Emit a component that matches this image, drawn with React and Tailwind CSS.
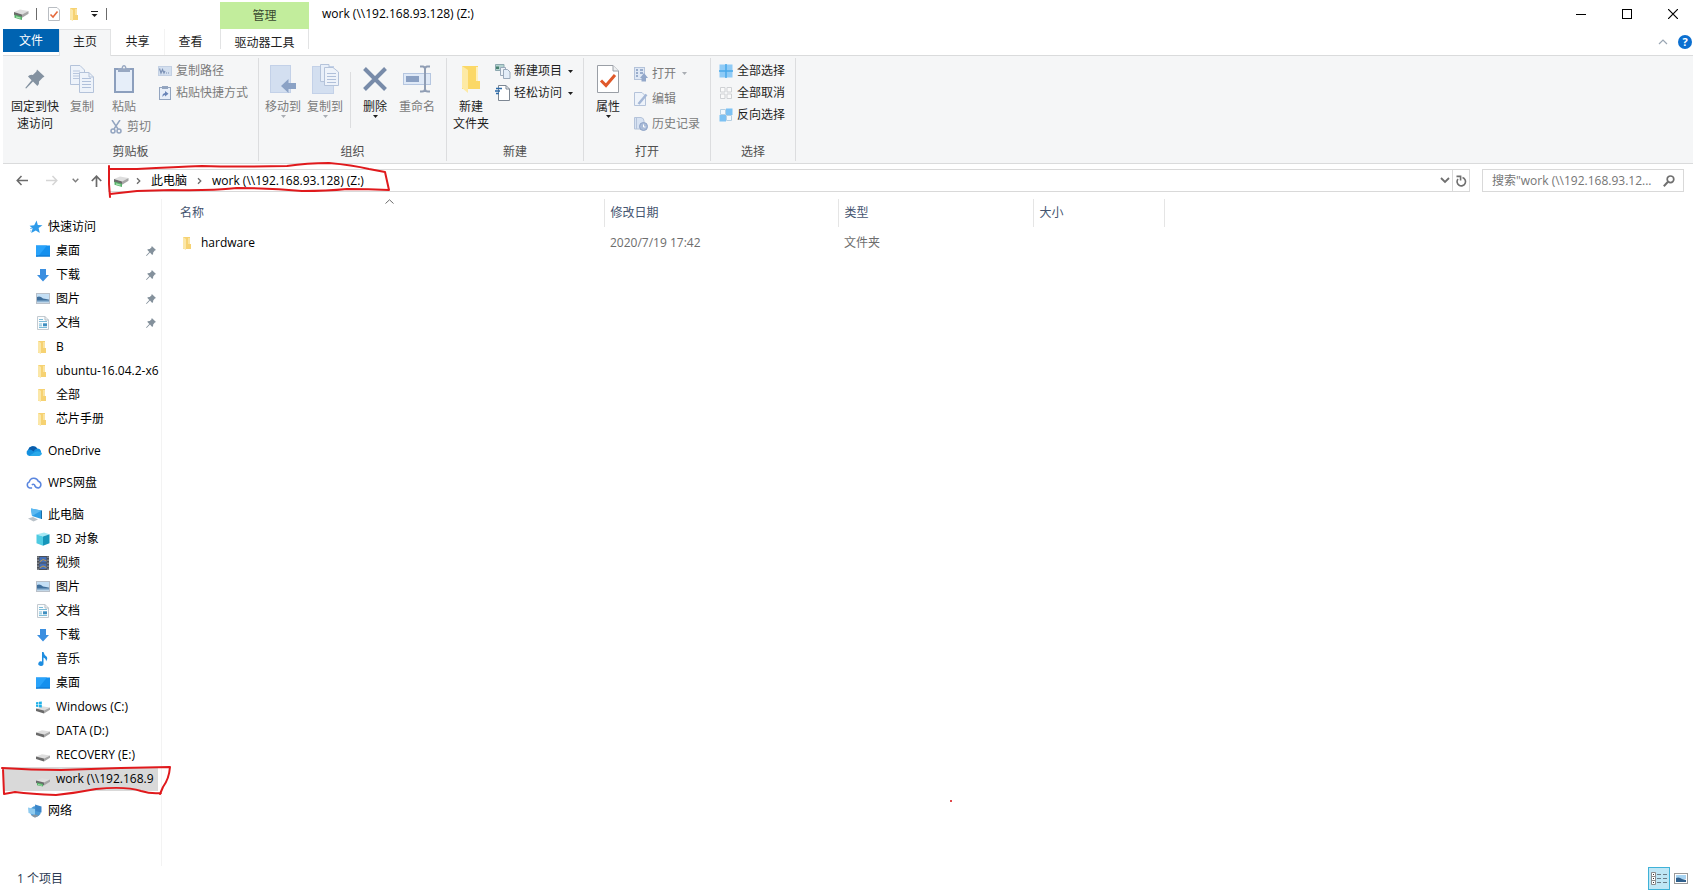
import React, { useState } from 'react';

/* ---------- small icons ---------- */

const DriveIcon = ({ net, win }) => (
  <svg width="16" height="16" viewBox="0 0 16 16" className="shrink-0">
    <path d="M1 9.5 L7 7.2 L15 8.6 L9 11.6 Z" fill="#dedede" />
    <path d="M1 9.5 L9 11.6 V14.4 L1 12 Z" fill="#6a6a6a" />
    <path d="M9 11.6 L15 8.6 V10.8 L9 14.4 Z" fill="#a6a6a6" />
    {net && (
      <>
        <path d="M2 11.4 L8 13 V15.6 L2 14.2 Z" fill="#57b069" />
        <path d="M3 13.4 L7 14.4" stroke="#9cdca6" strokeWidth="1" />
      </>
    )}
    {win && <path d="M1 3.2 L3.4 2.9 V5.2 H1 Z M4 2.8 L6.8 2.4 V5.2 H4 Z M1 5.8 H3.4 V8.1 L1 7.8 Z M4 5.8 H6.8 V8.6 L4 8.2 Z" fill="#1fb1e8" />}
  </svg>
);

const NetDriveIcon = () => (
  <svg width="16" height="14" viewBox="0 0 16 14" className="shrink-0">
    <path d="M1 5 L7 2.5 L15.5 4 L9 7.4 Z" fill="#dedede" />
    <path d="M1 5 L9 7.4 V10.8 L1 8 Z" fill="#6a6a6a" />
    <path d="M9 7.4 L15.5 4 V6.8 L9 10.8 Z" fill="#a6a6a6" />
    <path d="M1.5 7.6 L9 9.8 V13 L1.5 10.8 Z" fill="#57b069" />
    <path d="M3 9.9 L7.5 11.2" stroke="#a9e5b2" strokeWidth="1.2" />
  </svg>
);

const FolderIcon = () => (
  <svg width="16" height="16" viewBox="0 0 16 16" className="shrink-0">
    <path d="M3 2 H10 V9 H11 V14 H3 Z" fill="#f6d272" />
    <path d="M3 2 L6 4 V15 L3 13.5 Z" fill="#fbe7a8" />
    <path d="M8 3 H10 V9 H8 Z" fill="#fae3a0" />
  </svg>
);

const StarIcon = () => (
  <svg width="16" height="16" viewBox="0 0 16 16" className="shrink-0">
    <path d="M9.6 1.5 L10.8 6 L15.5 6.2 L11.6 9 L12.8 14 L8.8 11.4 L4.2 14 L5.6 9.6 L2.6 6.8 L7.2 6.2 Z" fill="#2e9bea" />
    <path d="M3 9.5 H5 M3 12 H4.6" stroke="#8cc8f5" strokeWidth="1" />
  </svg>
);

const DesktopIcon = () => (
  <svg width="16" height="16" viewBox="0 0 16 16" className="shrink-0">
    <rect x="1" y="2.500" width="14" height="11" fill="#1590ee" />
    <path d="M1 2.500 H12 L3 13.500 H1 Z" fill="#28a2fa" />
    <path d="M1 13 H15" stroke="#0e75cc" strokeWidth="1" />
  </svg>
);

const DownloadIcon = () => (
  <svg width="16" height="16" viewBox="0 0 16 16" className="shrink-0">
    <path d="M5 2 H11 V8 H14 L8 14.5 L2 8 H5 Z" fill="#3b8fe0" />
  </svg>
);

const PictureIcon = () => (
  <svg width="16" height="16" viewBox="0 0 16 16" className="shrink-0">
    <rect x="1.5" y="2.5" width="13" height="10" fill="#f4f8fb" stroke="#b9c0c9" />
    <rect x="2" y="3" width="12" height="5" fill="#c4dff5" />
    <path d="M2 6 Q5 4.500 8 7.500 L14 8.500 V11 H2 Z" fill="#3f6f9c" />
    <path d="M2 9.500 H14 V11.500 H2 Z" fill="#8fb4d3" />
  </svg>
);

const DocumentIcon = () => (
  <svg width="16" height="16" viewBox="0 0 16 16" className="shrink-0">
    <path d="M2.5 1.5 H10 L13.5 5 V14.5 H2.5 Z" fill="#fafcfd" stroke="#c3cad0" />
    <path d="M10 1.5 V5 H13.5" fill="none" stroke="#b3bcc4" />
    <path d="M4 4.5 H8 M4 6.5 H12 M4 9 H7 M4 12.5 H12 M4 10.8 H7" stroke="#7cbcd9" />
    <rect x="8" y="8.3" width="4" height="3" fill="#3f8fc0" />
  </svg>
);

const OneDriveIcon = () => (
  <svg width="18" height="16" viewBox="0 0 17 16" className="shrink-0 -ml-0.5">
    <path d="M4 13 A3.4 3.4 0 0 1 2.6 6.8 A5.2 5.2 0 0 1 11.8 5.6 A3.8 3.8 0 0 1 13 13 Z" fill="#1490df" />
    <path d="M2.6 6.8 A5.2 5.2 0 0 1 11.8 5.6 Q9 6 8 8.5 Q5.5 6 2.6 6.8 Z" fill="#0b5ba9" />
    <path d="M3.6 13 L9.5 9 Q13 7.2 16.4 10 Q16.4 12.6 13 13 Z" fill="#29a9ea" />
  </svg>
);

const WpsCloudIcon = () => (
  <svg width="18" height="16" viewBox="0 0 17 16" className="shrink-0 -ml-0.5" fill="none" stroke="#5a86df" strokeWidth="1.5">
    <path d="M6.600 13 H4.300 A3.200 3.200 0 0 1 3.800 6.900 A4.700 4.700 0 0 1 12.800 6.300 A3.500 3.500 0 0 1 13 13 Q9.600 12.800 9 9.800 Q7.600 8.600 6.400 10" />
  </svg>
);

const ComputerIcon = () => (
  <svg width="16" height="16" viewBox="0 0 16 16" className="shrink-0">
    <path d="M4 1.5 L14.5 3.5 V12 L5 9 Z" fill="#2f9fe6" />
    <path d="M4 1.5 L14.5 3.5 L5 9 Z" fill="#5cb9f1" />
    <path d="M1 11.5 L6 10 L11 12.5 L6.5 14.5 Z" fill="#b9c2c9" />
    <path d="M14.5 3.5 V12" stroke="#1c6ea8" />
  </svg>
);

const CubeIcon = () => (
  <svg width="16" height="16" viewBox="0 0 16 16" className="shrink-0">
    <path d="M1.5 3.5 L9 1.5 L14.5 3.2 L8 5.5 Z" fill="#a5e9f4" />
    <path d="M1.5 3.5 L8 5.5 V14.8 L1.5 12.2 Z" fill="#4fcbe2" />
    <path d="M8 5.5 L14.5 3.2 V12.2 L8 14.8 Z" fill="#1696ba" />
  </svg>
);

const VideoIcon = () => (
  <svg width="16" height="16" viewBox="0 0 16 16" className="shrink-0">
    <rect x="2" y="1" width="12" height="14" fill="#4b4f57" />
    <path d="M3 1.5 V15 M13 1.5 V15" stroke="#b5b9bf" strokeDasharray="1.5 1.5" />
    <rect x="4.5" y="2" width="7" height="5.5" fill="#4570b8" />
    <rect x="4.5" y="8.5" width="7" height="5.5" fill="#4570b8" />
    <path d="M4.5 7 L8 4.5 L11.5 6 M4.5 13 L8 11 L11.5 12.5" stroke="#c09a4e" fill="none" />
  </svg>
);

const MusicIcon = () => (
  <svg width="16" height="16" viewBox="0 0 16 16" className="shrink-0">
    <path d="M7 1 H8.5 Q9 4 12 6 Q13 8 11 10.5 Q11.2 7.5 8.5 6.5 V12.5 A2.6 2.3 0 1 1 7 10.6 Z" fill="#1e8de0" />
  </svg>
);

const NetworkIcon = () => (
  <svg width="16" height="16" viewBox="0 0 16 16" className="shrink-0">
    <circle cx="8.5" cy="8.500" r="5.4" fill="#4a9ad6" />
    <path d="M8 1.5 L14.5 3.500 V9.5 L8.5 8 Z" fill="#3c86c9" />
    <path d="M1 4.5 L8 6 V12 L1.5 10 Z" fill="#8fcbf0" />
    <path d="M4 12.6 L8 14.8 L12 12.4 L8 11.5 Z" fill="#8796a3" />
  </svg>
);

const PinSmall = () => (
  <svg width="12" height="12" viewBox="0 0 12 12" className="shrink-0">
    <path d="M6.8 1 L11 5 L9.8 5.6 L8.2 7.6 Q8.4 9.4 7.2 10 L5 7.6 L1.6 11 L1 10.6 L4.3 7 L2.2 4.8 Q3 3.8 4.7 4 L6.4 2.4 Z" fill="#84919c" />
  </svg>
);

/* ---------- ribbon icons ---------- */

const PinBig = () => (
  <svg width="22" height="22" viewBox="0 0 22 22">
    <path d="M13 1.5 L20.5 8.6 L18.6 9.8 L15 13.4 Q15.6 16.6 13.4 18 L9 13.6 L2.2 20.6 L1.2 20 L7.6 12.2 L4 8.6 Q5.4 6.4 8.8 7 L12.4 3.6 Z" fill="#8492a1" />
  </svg>
);

const CopyBig = () => (
  <svg width="24" height="28" viewBox="0 0 24 28">
    <path d="M.5 .5 H10 L14.5 5 V19.5 H.5 Z" fill="#eef3fa" stroke="#b4c3da" />
    <path d="M3 6 H10 M3 8.5 H12 M3 11 H12 M3 13.5 H12" stroke="#b9c7de" />
    <path d="M9.5 7.500 H19 L23.500 12 V27.500 H9.500 Z" fill="#eef3fa" stroke="#b4c3da" />
    <path d="M19 7.500 V12 H23.500" fill="none" stroke="#b4c3da" />
    <path d="M12 13.500 H21 M12 16.500 H21 M12 19.500 H21 M12 22.500 H21" stroke="#b0c0da" />
  </svg>
);

const PasteBig = () => (
  <svg width="22" height="30" viewBox="0 0 22 30">
    <rect x="2" y="5" width="18" height="23" fill="#e6eef9" stroke="#8c9fbd" strokeWidth="2" />
    <path d="M5 4 H8.500 Q9 1 11 1 Q13 1 13.500 4 H17 V8 H5 Z" fill="#98a8c2" />
    <circle cx="11" cy="3.500" r="1" fill="#f5f6f7" />
  </svg>
);

const MoveBig = () => (
  <svg width="26" height="29" viewBox="0 0 26 29">
    <rect x=".5" y=".5" width="20" height="27" fill="#d3dff0" stroke="#c3d1e8" />
    <path d="M11 21 L18.500 14 V18 H26 V24 H18.500 V28 Z" fill="#8ba2c5" />
  </svg>
);

const CopyToBig = () => (
  <svg width="27" height="30" viewBox="0 0 27 30">
    <rect x=".5" y="2.500" width="21" height="27" fill="#d3dff0" stroke="#c3d1e8" />
    <path d="M8.500 .5 H17 V17.500 H8.500 Z" fill="#e8eff9" stroke="#b4c3da" />
    <path d="M12.500 3.500 H21 L26.500 8 V21.500 H12.500 Z" fill="#eef3fa" stroke="#b4c3da" />
    <path d="M15 9.500 H24 M15 12.500 H24 M15 15.500 H24 M15 18.500 H24" stroke="#b0c0da" />
  </svg>
);

const DeleteBig = () => (
  <svg width="24" height="24" viewBox="0 0 24 24">
    <path d="M1.500 1.500 L22.500 22.500 M22.500 1.500 L1.500 22.500" stroke="#788ba9" strokeWidth="4" />
  </svg>
);

const RenameBig = () => (
  <svg width="28" height="28" viewBox="0 0 28 28">
    <rect x=".5" y="8.500" width="27" height="11" fill="#dfe9f7" stroke="#b5c6e0" />
    <rect x="3" y="11" width="13" height="6" fill="#8aa0c3" />
    <path d="M17 1.500 H20 Q22 2 22 4 V24 Q22 26.500 19 26.500 H17 M27 1.500 H24 Q22 2 22 4 M22 24 Q22 26.500 25 26.500 H27" fill="none" stroke="#8f9db4" strokeWidth="2" />
  </svg>
);

const NewFolderBig = () => (
  <svg width="20" height="28" viewBox="0 0 20 28">
    <path d="M1 1 H17 V16 H19 V24 H1 Z" fill="#fbd867" />
    <path d="M1 1 L7 5 V28 L1 23 Z" fill="#fdeaa5" />
    <path d="M15 2 H17 V16 H15 Z" fill="#fff0bd" />
  </svg>
);

const PropertiesBig = () => (
  <svg width="22" height="28" viewBox="0 0 22 28">
    <path d="M.5 .5 H16 L21.500 6 V27.500 H.5 Z" fill="#fff" stroke="#9a9fa6" />
    <path d="M16 .5 V6 H21.500" fill="#eef0f2" stroke="#9a9fa6" />
    <path d="M4 15.500 L9 20.500 L18 10" fill="none" stroke="#e0592a" strokeWidth="3" />
  </svg>
);

const CutIcon = () => (
  <svg width="12" height="14" viewBox="0 0 12 14" fill="none" stroke="#93a5c0" strokeWidth="1.500">
    <path d="M2 0 L8 9 M10 0 L4 9" />
    <circle cx="3" cy="11" r="2" />
    <circle cx="9" cy="11" r="2" />
  </svg>
);

const CopyPathIcon = () => (
  <svg width="14" height="14" viewBox="0 0 14 14">
    <rect x=".5" y="2.500" width="13" height="9" fill="#d3dfef" stroke="#c3d0e3" />
    <path d="M1.500 4.500 L3 9 L4.500 5.500 L6 9 L7 7" fill="none" stroke="#7c92b6" strokeWidth="1.200" />
    <path d="M8 9 H9 M10 9 H11" stroke="#7c92b6" strokeWidth="1.200" />
  </svg>
);

const PasteShortcutIcon = () => (
  <svg width="14" height="14" viewBox="0 0 14 14">
    <rect x="1.500" y="1.500" width="11" height="12" fill="#e8eff9" stroke="#93a5c0" />
    <rect x="4" y="0" width="6" height="3" fill="#93a5c0" />
    <path d="M4.500 11 Q4 7.500 7 7 V5 L10.500 7.800 L7 10.500 V9 Q5.500 9 4.500 11 Z" fill="#6985b8" />
  </svg>
);

const NewItemIcon = () => (
  <svg width="16" height="15" viewBox="0 0 16 15" className="shrink-0">
    <path d="M.5 .5 H9 V6.500 H.5 Z" fill="#b3d3cf" stroke="#8da8b0" />
    <path d="M1 2.500 H4 V5 H1 Z" fill="#47806f" />
    <path d="M5.500 3.500 H10.500 V11.500 H5.500 Z" fill="#eef3f8" stroke="#9aa9ba" />
    <path d="M8.500 5.500 H12.500 L15 8 V14.500 H8.500 Z" fill="#e3edf8" stroke="#9aa9ba" />
  </svg>
);

const EasyAccessIcon = () => (
  <svg width="16" height="16" viewBox="0 0 16 16" className="shrink-0">
    <path d="M3.500 .5 H11 L14.500 4 V15.500 H3.500 Z" fill="#fff" stroke="#7d8793" />
    <path d="M11 .5 V4 H14.500" fill="none" stroke="#7d8793" />
    <path d="M1 3.500 H7 M0 6 H5 M1 8.500 H4" stroke="#2b6aa8" strokeWidth="1.300" />
  </svg>
);

const OpenIcon = () => (
  <svg width="14" height="16" viewBox="0 0 14 16">
    <rect x=".5" y="1.500" width="10" height="12" fill="#dfe8f5" stroke="#b4c3da" />
    <path d="M2 4 H4 M2 7 H4 M2 10 H4 M6 4 H9 M6 7 H9" stroke="#8299bf" strokeWidth="1.500" />
    <path d="M7.500 15.500 V12 H6 L10 7 L14 12 H12 V15.500 Z" fill="#93a8ca" />
  </svg>
);

const EditIcon = () => (
  <svg width="14" height="16" viewBox="0 0 14 16">
    <path d="M.5 1.500 H8 L11.500 5 V14.500 H.5 Z" fill="#eef3fa" stroke="#b4c3da" />
    <path d="M4.500 13 L12.500 3.500" stroke="#a4b7d6" strokeWidth="2.500" />
  </svg>
);

const HistoryIcon = () => (
  <svg width="14" height="16" viewBox="0 0 14 16">
    <path d="M.5 1.500 H7 Q10 2 10 5 V13 H.5 Z" fill="#d7e2f2" stroke="#b4c3da" />
    <path d="M2.500 2 V13" stroke="#b4c3da" />
    <circle cx="9.500" cy="10.500" r="4" fill="#a9bbd8" stroke="#8ea3c6" />
    <path d="M9.500 8.500 V11 H11.500" stroke="#fff" fill="none" />
  </svg>
);

const SelectAllIcon = () => (
  <svg width="14" height="14" viewBox="0 0 14 14">
    <path d="M.5 .5 H13.500 V13.500 H.5 Z" fill="#8fcbf6" />
    <path d="M7 0 V14 M0 7 H14" stroke="#4aa9ea" strokeWidth="1.500" />
  </svg>
);

const SelectNoneIcon = () => (
  <svg width="14" height="14" viewBox="0 0 14 14" fill="#fafafa" stroke="#cfd1d4">
    <path d="M1.500 1.500 H6 V6 H1.500 Z M8 1.500 H12.500 V6 H8 Z M1.500 8 H6 V12.500 H1.500 Z M8 8 H12.500 V12.500 H8 Z" />
  </svg>
);

const InvertIcon = () => (
  <svg width="14" height="14" viewBox="0 0 14 14">
    <path d="M1.500 1.500 H6.500 V6.500 H1.500 Z M7.500 7.500 H12.500 V12.500 H7.500 Z" fill="#f2f8fd" stroke="#b5cfe2" />
    <path d="M7 .5 H13.500 V7 H7 Z M.5 7 H7 V13.500 H.5 Z" fill="#7cc1f3" />
  </svg>
);

const Caret = ({ muted }) => (
  <svg width="5" height="3" viewBox="0 0 5 3" className="shrink-0">
    <path d="M0 0 H5 L2.500 3 Z" fill={muted ? '#a9adb3' : '#1e1e1e'} />
  </svg>
);

/* ---------- ribbon pieces ---------- */

const BigButton = ({ icon, lines, width, muted, caret }) => (
  <button type="button" disabled={muted} className={`${width} flex flex-col items-center leading-[17px] ${muted ? 'text-[#7b7b7b]' : 'text-[#1e1e1e]'}`}>
    <span className="h-[30px] mb-1 flex items-center justify-center">{icon}</span>
    {lines.map((line) => (
      <span key={line} className="whitespace-nowrap">{line}</span>
    ))}
    {caret && <Caret muted={muted} />}
  </button>
);

const SmallButton = ({ icon, label, muted, caret, height = 'h-[22px]' }) => (
  <button type="button" disabled={muted} className={`${height} flex items-center gap-1 whitespace-nowrap ${muted ? 'text-[#7b7b7b]' : 'text-[#1e1e1e]'}`}>
    <span className="w-[14px] flex justify-center">{icon}</span>
    <span>{label}</span>
    {caret && <span className="ml-0.5"><Caret muted={muted} /></span>}
  </button>
);

const Group = ({ label, className, children }) => (
  <section aria-label={label} className="flex flex-col border-r border-[#dcdddf] my-0.5">
    <div className={`h-[86px] flex items-start ${className}`}>{children}</div>
    <div className="h-4 text-center leading-4 text-[#4f4f4f]">{label}</div>
  </section>
);

const Ribbon = () => (
  <div className="ml-[3px] h-[109px] flex bg-[#f5f6f7] border-y border-[#dadbdc]">
    <Group label="剪贴板" className="pl-1 pr-2.5 pt-1.5">
      <BigButton icon={<PinBig />} lines={['固定到快', '速访问']} width="w-14" />
      <BigButton icon={<CopyBig />} lines={['复制']} width="w-[38px]" muted />
      <div className="w-[52px] flex flex-col items-start">
        <BigButton icon={<PasteBig />} lines={['粘贴']} width="w-[46px]" muted />
        <div className="ml-2 mt-1">
          <SmallButton icon={<CutIcon />} label="剪切" height="h-4" muted />
        </div>
      </div>
      <div className="ml-[5px] -mt-1">
        <SmallButton icon={<CopyPathIcon />} label="复制路径" muted />
        <SmallButton icon={<PasteShortcutIcon />} label="粘贴快捷方式" muted />
      </div>
    </Group>

    <Group label="组织" className="pl-[3px] pr-[7px] pt-1.5">
      <BigButton icon={<MoveBig />} lines={['移动到']} width="w-[42px]" muted caret />
      <BigButton icon={<CopyToBig />} lines={['复制到']} width="w-[42px]" muted caret />
      <div className="mx-1 mt-2 h-14 w-px bg-[#dcdddf]" />
      <BigButton icon={<DeleteBig />} lines={['删除']} width="w-10" caret />
      <BigButton icon={<RenameBig />} lines={['重命名']} width="w-11" muted />
    </Group>

    <Group label="新建" className="pl-[3px] pr-2.5 pt-1.5">
      <BigButton icon={<NewFolderBig />} lines={['新建', '文件夹']} width="w-[42px]" />
      <div className="ml-1 -mt-1">
        <SmallButton icon={<NewItemIcon />} label="新建项目" caret />
        <SmallButton icon={<EasyAccessIcon />} label="轻松访问" caret />
      </div>
    </Group>

    <Group label="打开" className="pl-[3px] pr-2.5 pt-1.5">
      <BigButton icon={<PropertiesBig />} lines={['属性']} width="w-[42px]" caret />
      <div className="ml-[5px] -mt-[3px]">
        <SmallButton icon={<OpenIcon />} label="打开" height="h-[25px]" muted caret />
        <SmallButton icon={<EditIcon />} label="编辑" height="h-[25px]" muted />
        <SmallButton icon={<HistoryIcon />} label="历史记录" height="h-[25px]" muted />
      </div>
    </Group>

    <Group label="选择" className="pl-2 pr-2.5 pt-0.5">
      <div>
        <SmallButton icon={<SelectAllIcon />} label="全部选择" />
        <SmallButton icon={<SelectNoneIcon />} label="全部取消" />
        <SmallButton icon={<InvertIcon />} label="反向选择" />
      </div>
    </Group>
  </div>
);

/* ---------- title bar and tabs ---------- */

const TitleBar = () => (
  <header className="h-[29px] flex">
    <div className="w-[220px] pl-[13px] pb-0.5 flex items-center">
      <NetDriveIcon />
      <span className="ml-[7px] h-3 w-px bg-[#6b6b6b]" />
      <button type="button" aria-label="属性" className="ml-2.5">
        <svg width="14" height="14" viewBox="0 0 14 14">
          <path d="M1.500 .5 H10 L12.500 3 V13.500 H1.500 Z" fill="#fff" stroke="#b9bdc2" />
          <path d="M3.500 7.500 L6 10 L10.500 4.500" fill="none" stroke="#e56a3d" strokeWidth="1.600" />
        </svg>
      </button>
      <button type="button" aria-label="新建文件夹" className="ml-1.5"><FolderIcon /></button>
      <button type="button" aria-label="自定义快速访问工具栏" className="ml-[7px]">
        <svg width="9" height="8" viewBox="0 0 9 8">
          <path d="M1 1.500 H8" stroke="#1e1e1e" />
          <path d="M1.500 4 H7.500 L4.500 7 Z" fill="#1e1e1e" />
        </svg>
      </button>
      <span className="ml-[7px] h-3 w-px bg-[#6b6b6b]" />
    </div>
    <div className="mt-0.5 w-[89px] flex items-center justify-center bg-[#c2ed9c] text-[#3a4a30]">管理</div>
    <h1 className="ml-[13px] pb-0.5 flex-1 flex items-center text-black">work (\\192.168.93.128) (Z:)</h1>
    <div className="-mr-[3px] pb-0.5 flex">
      <button type="button" aria-label="最小化" className="w-[46px] flex items-center justify-center">
        <svg width="10" height="10" viewBox="0 0 10 10"><path d="M0 5.500 H10" stroke="#000" /></svg>
      </button>
      <button type="button" aria-label="最大化" className="w-[46px] flex items-center justify-center">
        <svg width="10" height="10" viewBox="0 0 10 10"><rect x=".5" y=".5" width="9" height="9" fill="none" stroke="#000" /></svg>
      </button>
      <button type="button" aria-label="关闭" className="w-[46px] flex items-center justify-center">
        <svg width="10" height="10" viewBox="0 0 10 10"><path d="M0 0 L10 10 M10 0 L0 10" stroke="#000" strokeWidth="1.200" /></svg>
      </button>
    </div>
  </header>
);

const Tabs = () => (
  <div role="tablist" className="h-[26px] pl-[3px] flex items-start text-[#1e1e1e]">
    <button type="button" role="tab" className="h-[23px] w-14 bg-[#0063b1] text-white">文件</button>
    <button type="button" role="tab" aria-selected="true" className="relative z-10 h-[27px] w-[52px] pb-0.5 bg-[#f5f6f7] border-x border-t border-[#e2e3e4]">主页</button>
    <button type="button" role="tab" className="h-[26px] w-[54px] border-r border-[#f3f3f3]">共享</button>
    <button type="button" role="tab" className="h-[26px] w-[55px] pr-1">查看</button>
    <button type="button" role="tab" className="h-5 w-[89px] pt-1.5 border-x border-[#e2e3e4]">驱动器工具</button>
    <div className="h-[26px] flex-1 flex items-center justify-end gap-2.5 pr-px">
      <button type="button" aria-label="最小化功能区">
        <svg width="10" height="6" viewBox="0 0 10 6"><path d="M1 5 L5 1 L9 5" fill="none" stroke="#9aa6b3" strokeWidth="1.200" /></svg>
      </button>
      <button type="button" aria-label="帮助" className="h-3.5 w-3.5 rounded-full bg-[#0b6fd0] text-white text-[11px] leading-[14px] font-bold">?</button>
    </div>
  </div>
);

/* ---------- address row ---------- */

const Chevron = () => (
  <svg width="5" height="8" viewBox="0 0 5 8" className="shrink-0">
    <path d="M1 1.200 L3.800 4 L1 6.800" fill="none" stroke="#6b6b6b" strokeWidth="1.300" />
  </svg>
);

const AddressRow = () => (
  <div className="relative h-[35px] pt-[5px] pr-[9px] flex items-start">
    <div className="w-[108px] h-[23px] pl-4 flex items-center">
      <button type="button" aria-label="后退">
        <svg width="12" height="11" viewBox="0 0 12 11" fill="none" stroke="#6a6a6a" strokeWidth="1.500"><path d="M5.500 1 L1.200 5.500 L5.500 10 M1.200 5.500 H12" /></svg>
      </button>
      <button type="button" aria-label="前进" className="ml-[18px]">
        <svg width="12" height="11" viewBox="0 0 12 11" fill="none" stroke="#d5d5d5" strokeWidth="1.500"><path d="M6.500 1 L10.800 5.500 L6.500 10 M10.800 5.500 H0" /></svg>
      </button>
      <button type="button" aria-label="最近位置" className="ml-3.5">
        <svg width="7" height="5" viewBox="0 0 7 5" fill="none" stroke="#7d7d7d" strokeWidth="1.400"><path d="M.7 .7 L3.500 3.700 L6.300 .7" /></svg>
      </button>
      <button type="button" aria-label="上移" className="ml-3">
        <svg width="11" height="12" viewBox="0 0 11 12" fill="none" stroke="#6a6a6a" strokeWidth="1.700"><path d="M.8 6 L5.500 1.200 L10.200 6 M5.500 1.200 V12" /></svg>
      </button>
    </div>

    <div className="flex-1 h-[23px] pl-1 flex items-center border border-[#d9d9d9] text-black">
      <NetDriveIcon />
      <span className="ml-[7px] mr-2.5"><Chevron /></span>
      <button type="button">此电脑</button>
      <span className="mx-2.5"><Chevron /></span>
      <button type="button">work (\\192.168.93.128) (Z:)</button>
      <button type="button" aria-label="以前的位置" className="ml-auto mr-0.5">
        <svg width="10" height="7" viewBox="0 0 10 7" fill="none" stroke="#6f6f6f" strokeWidth="1.800"><path d="M1 1 L5 5 L9 1" /></svg>
      </button>
      <button type="button" aria-label="刷新" className="h-full w-[17px] flex items-center justify-center border-l border-[#d9d9d9]">
        <svg width="11" height="12" viewBox="0 0 11 12" fill="none" stroke="#6f6f6f" strokeWidth="1.600">
          <path d="M6.500 2.600 A4.200 4.200 0 1 1 2 4 M.5 1.400 H4.600 V5.400" />
        </svg>
      </button>
    </div>

    <label className="ml-3 w-[202px] h-[23px] pl-[9px] pr-2 flex items-center border border-[#d9d9d9]">
      <input type="text" aria-label="搜索" placeholder={'搜索"work (\\\\192.168.93.12...'} className="min-w-0 flex-1 bg-transparent outline-none placeholder:text-[#757575]" />
      <svg width="12" height="12" viewBox="0 0 12 12" fill="none" stroke="#6f6f6f" className="shrink-0">
        <circle cx="7.500" cy="4.300" r="3.300" strokeWidth="1.700" />
        <path d="M5 6.800 L.8 11.200" strokeWidth="2" />
      </svg>
    </label>

    {/* pen mark round the path */}
    <svg width="286" height="40" viewBox="0 0 286 40" fill="none" stroke="#e0191c" strokeWidth="2" strokeLinecap="round" strokeLinejoin="round" className="pointer-events-none absolute left-[107px] -top-[2px]">
      <path d="M2 4 V22 L3 35 M2 7 L30 7 Q70 5 95 4 Q130 5 180 4 Q200 1 222 1 Q245 3 262 7 L278 10 L282 28 Q262 27 240 27 Q220 29 195 29 Q165 26 130 26 Q100 29 65 28 L30 29 L3 32" />
    </svg>
  </div>
);

/* ---------- sidebar ---------- */

const TREE = [
  [
    { label: '快速访问', icon: <StarIcon />, root: true },
    { label: '桌面', icon: <DesktopIcon />, pinned: true },
    { label: '下载', icon: <DownloadIcon />, pinned: true },
    { label: '图片', icon: <PictureIcon />, pinned: true },
    { label: '文档', icon: <DocumentIcon />, pinned: true },
    { label: 'B', icon: <FolderIcon /> },
    { label: 'ubuntu-16.04.2-x6', icon: <FolderIcon /> },
    { label: '全部', icon: <FolderIcon /> },
    { label: '芯片手册', icon: <FolderIcon /> },
  ],
  [{ label: 'OneDrive', icon: <OneDriveIcon />, root: true }],
  [{ label: 'WPS网盘', icon: <WpsCloudIcon />, root: true }],
  [
    { label: '此电脑', icon: <ComputerIcon />, root: true },
    { label: '3D 对象', icon: <CubeIcon /> },
    { label: '视频', icon: <VideoIcon /> },
    { label: '图片', icon: <PictureIcon /> },
    { label: '文档', icon: <DocumentIcon /> },
    { label: '下载', icon: <DownloadIcon /> },
    { label: '音乐', icon: <MusicIcon /> },
    { label: '桌面', icon: <DesktopIcon /> },
    { label: 'Windows (C:)', icon: <DriveIcon win /> },
    { label: 'DATA (D:)', icon: <DriveIcon /> },
    { label: 'RECOVERY (E:)', icon: <DriveIcon /> },
    { label: 'work (\\\\192.168.9', icon: <DriveIcon net />, marked: true },
  ],
  [{ label: '网络', icon: <NetworkIcon />, root: true }],
];

const Sidebar = () => {
  const [selected, setSelected] = useState('work (\\\\192.168.9');

  return (
    <nav className="w-[162px] shrink-0 pt-4 px-[3px] flex flex-col gap-2 border-r border-[#f3f3f3] text-black">
      {TREE.map((group) => (
        <ul key={group[0].label}>
          {group.map((item) => (
            <li key={item.label} className="relative">
              <button
                type="button"
                onClick={() => setSelected(item.label)}
                className={`h-6 w-full flex items-center gap-[5px] text-left ${item.root ? 'pl-6' : 'pl-8'} ${selected === item.label ? 'bg-[#d9d9d9]' : ''}`}
              >
                {item.icon}
                <span className="flex-1 whitespace-nowrap">{item.label}</span>
                {item.pinned && <span className="mr-px"><PinSmall /></span>}
              </button>
              {/* pen mark round the mapped drive */}
              {item.marked && (
                <svg width="172" height="32" viewBox="0 0 172 32" fill="none" stroke="#e0191c" strokeWidth="2" strokeLinecap="round" strokeLinejoin="round" className="pointer-events-none absolute -left-[2px] -top-[2px] z-10">
                  <path d="M1 3 Q30 5 60 5 Q90 4 120 3 L169 2 Q168 14 162 22 L159 29 M2 4 L3 29 L14 27 Q30 29 55 30 Q75 28 95 24 Q125 21 140 26 Q150 29 160 28" />
                </svg>
              )}
            </li>
          ))}
        </ul>
      ))}
    </nav>
  );
};

/* ---------- file list ---------- */

const FileList = () => (
  <main className="relative flex-1 min-w-0">
    <table className="table-fixed w-[1002px] border-collapse text-left">
      <colgroup>
        <col className="w-[442px]" />
        <col className="w-[234px]" />
        <col className="w-[195px]" />
        <col className="w-[131px]" />
      </colgroup>
      <thead>
        <tr className="h-7 text-[#44546f]">
          <th scope="col" className="relative pl-[18px] p-0 font-normal border-r border-[#e5e5e5]">
            名称
            <svg width="9" height="5" viewBox="0 0 9 5" className="absolute left-[223px] top-0" fill="none" stroke="#6b6b6b"><path d="M.5 4.500 L4.500 .8 L8.500 4.500" /></svg>
          </th>
          <th scope="col" className="pl-1.5 p-0 font-normal border-r border-[#e5e5e5]">修改日期</th>
          <th scope="col" className="pl-1.5 p-0 font-normal border-r border-[#e5e5e5]">类型</th>
          <th scope="col" className="pl-1.5 p-0 font-normal border-r border-[#e5e5e5]">大小</th>
        </tr>
      </thead>
      <tbody>
        <tr className="h-8 text-[#6d6d6d]">
          <td className="pl-[18px] p-0 text-black">
            <span className="flex items-center gap-[5px]"><FolderIcon />hardware</span>
          </td>
          <td className="pl-1.5 p-0">2020/7/19 17:42</td>
          <td className="pl-1.5 p-0">文件夹</td>
          <td />
        </tr>
      </tbody>
    </table>
    <span className="absolute left-[788px] bottom-16 h-0.5 w-0.5 bg-[#e0494c]" />
  </main>
);

const StatusBar = () => (
  <footer className="h-6 pl-[17px] pr-[5px] pt-px flex items-center text-[#2b3a52]">
    <span className="flex-1">1 个项目</span>
    <button type="button" aria-label="详细信息" className="h-[23px] w-[22px] flex items-center justify-center bg-[#bfe6f5] border border-[#3fb2d8]">
      <svg width="16" height="14" viewBox="0 0 16 14">
        <path d="M.5 .5 H4.500 V4.500 H.5 Z M.5 4.500 H4.500 V8.500 H.5 Z M.5 8.500 H4.500 V12.500 H.5 Z" fill="#fff" stroke="#8b8b8b" />
        <path d="M2 2.500 H3 M2 6.500 H3 M2 10.500 H3" stroke="#333" />
        <path d="M6 2.500 H10 M12 2.500 H16 M6 6.500 H10 M12 6.500 H16 M6 10.500 H10 M12 10.500 H16" stroke="#6a7d88" />
      </svg>
    </button>
    <button type="button" aria-label="大图标" className="ml-1">
      <svg width="14" height="11" viewBox="0 0 14 11">
        <rect x=".5" y=".5" width="13" height="10" fill="#fff" stroke="#9a9a9a" />
        <rect x="2" y="2" width="10" height="4" fill="#a8d4f2" />
        <path d="M2 5 Q5 3.500 8 6 L12 7 V9 H2 Z" fill="#2f5f8c" />
      </svg>
    </button>
  </footer>
);

const App = () => (
  <div className="min-h-screen flex flex-col overflow-hidden bg-white text-xs leading-4 font-['Open_Sans','Noto_Sans_CJK_SC',sans-serif]">
    <TitleBar />
    <Tabs />
    <Ribbon />
    <AddressRow />
    <div className="flex-1 flex">
      <Sidebar />
      <FileList />
    </div>
    <StatusBar />
  </div>
);

export default App;
